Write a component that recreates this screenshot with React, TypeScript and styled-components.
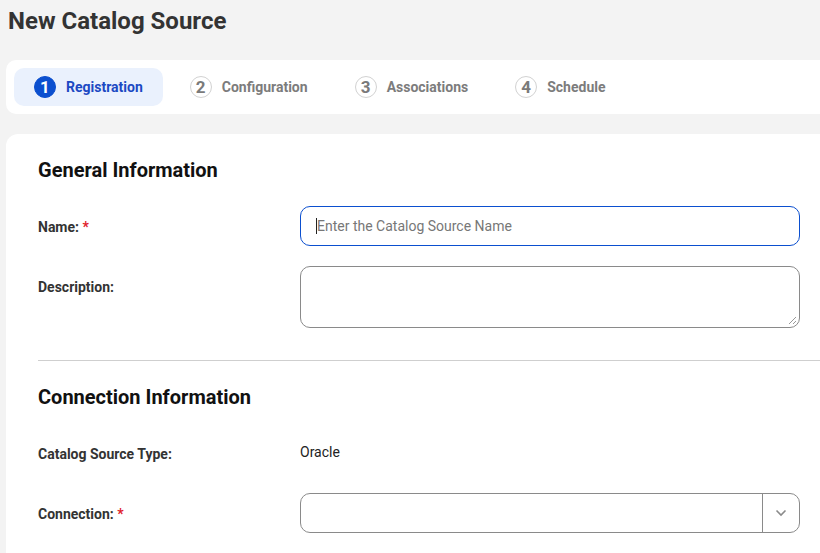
import React from "react";
import styled, { createGlobalStyle } from "styled-components";

const GlobalStyle = createGlobalStyle`
  html, body {
    margin: 0;
    padding: 0;
    background: #f3f3f3;
    overflow: hidden;
  }
  body {
    font-family: Roboto, "Liberation Sans", Arial, sans-serif;
    color: #333;
  }
  * { box-sizing: border-box; }
`;

const steps = ["Registration", "Configuration", "Associations", "Schedule"];

export default function App() {
  return (
    <Page>
      <GlobalStyle />
      <Title>New Catalog Source</Title>
      <StepBar>
        {steps.map((s, i) => (
          <Step key={s} $active={i === 0}>
            <StepNum $active={i === 0}>{i + 1}</StepNum>
            <StepLabel $active={i === 0}>{s}</StepLabel>
          </Step>
        ))}
      </StepBar>
      <Card>
        <SectionTitle>General Information</SectionTitle>
        <Rows>
          <Row>
            <Label>
              Name: <Req>*</Req>
            </Label>
            <TextInput $focused>
              <Caret />
              <Placeholder>Enter the Catalog Source Name</Placeholder>
            </TextInput>
          </Row>
          <Row>
            <Label>Description:</Label>
            <TextArea>
              <ResizeGrip viewBox="0 0 10 10" width="10" height="10">
                <path d="M9 2 L2 9 M9 6 L6 9" stroke="#999" strokeWidth="1" fill="none" />
              </ResizeGrip>
            </TextArea>
          </Row>
        </Rows>
        <Divider />
        <SectionTitle>Connection Information</SectionTitle>
        <Rows>
          <Row>
            <Label>Catalog Source Type:</Label>
            <Value>Oracle</Value>
          </Row>
          <Row>
            <Label>
              Connection: <Req>*</Req>
            </Label>
            <Select>
              <SelectValue />
              <SelectButton>
                <svg width="12" height="8" viewBox="0 0 12 8">
                  <path d="M1.5 1.5 L6 6 L10.5 1.5" stroke="#8a8a8a" strokeWidth="1.6" fill="none" />
                </svg>
              </SelectButton>
            </Select>
          </Row>
        </Rows>
      </Card>
    </Page>
  );
}

const Page = styled.div`
  width: 860px;
  padding: 0 0 0 6px;
`;

const Title = styled.h1`
  margin: 0;
  padding: 6px 0 0 2px;
  height: 60px;
  font-size: 24px;
  line-height: 30px;
  font-weight: 700;
  color: #333;
`;

const StepBar = styled.div`
  display: flex;
  align-items: center;
  gap: 7px;
  height: 54px;
  padding: 0 8px;
  background: #fff;
  border-radius: 10px;
`;

const Step = styled.div<{ $active?: boolean }>`
  display: flex;
  align-items: center;
  gap: 10px;
  height: 38px;
  padding: 0 20px;
  border-radius: 10px;
  background: ${(p) => (p.$active ? "#eaf1fd" : "transparent")};
`;

const StepNum = styled.span<{ $active?: boolean }>`
  width: 22px;
  height: 22px;
  border-radius: 50%;
  display: flex;
  align-items: center;
  justify-content: center;
  font-size: 17px;
  font-weight: 700;
  background: ${(p) => (p.$active ? "#0b4fcf" : "#fff")};
  color: ${(p) => (p.$active ? "#fff" : "#7a7a7a")};
  border: 1px solid ${(p) => (p.$active ? "#0b4fcf" : "#d2d2d2")};
`;

const StepLabel = styled.span<{ $active?: boolean }>`
  font-size: 14px;
  font-weight: 700;
  color: ${(p) => (p.$active ? "#1c49c3" : "#7c7c7c")};
`;

const Card = styled.div`
  margin-top: 20px;
  background: #fff;
  border-radius: 12px 0 0 0;
  padding: 24px 0 40px 32px;
`;

const SectionTitle = styled.h2`
  margin: 0 0 24px;
  font-size: 20px;
  line-height: 24px;
  font-weight: 700;
  color: #111;
`;

const Rows = styled.div`
  display: flex;
  flex-direction: column;
  gap: 20px;
`;

const Row = styled.div`
  display: flex;
  align-items: flex-start;
`;

const Label = styled.div`
  width: 262px;
  height: 40px;
  flex: none;
  font-size: 14px;
  font-weight: 700;
  line-height: 42px;
  color: #333;
`;

const Req = styled.span`
  color: #e0202a;
`;

const TextInput = styled.div<{ $focused?: boolean }>`
  width: 500px;
  height: 40px;
  border: 1px solid ${(p) => (p.$focused ? "#0b4fcf" : "#8a8a8a")};
  border-radius: 10px;
  display: flex;
  align-items: center;
  padding: 0 15px;
`;

const Caret = styled.span`
  width: 1px;
  height: 16px;
  background: #222;
`;

const Placeholder = styled.span`
  font-size: 14px;
  color: #777;
`;

const TextArea = styled.div`
  position: relative;
  width: 500px;
  height: 62px;
  border: 1px solid #8a8a8a;
  border-radius: 10px;
`;

const ResizeGrip = styled.svg`
  position: absolute;
  right: 2px;
  bottom: 2px;
`;

const Divider = styled.hr`
  margin: 32px 0 24px;
  border: none;
  border-top: 1px solid #cfcfcf;
`;

const Value = styled.div`
  font-size: 14px;
  line-height: 38px;
  color: #222;
`;

const Select = styled.div`
  width: 500px;
  height: 40px;
  border: 1px solid #8a8a8a;
  border-radius: 10px;
  display: flex;
`;

const SelectValue = styled.div`
  flex: 1;
`;

const SelectButton = styled.div`
  width: 37px;
  border-left: 1px solid #8a8a8a;
  display: flex;
  align-items: center;
  justify-content: center;
`;
